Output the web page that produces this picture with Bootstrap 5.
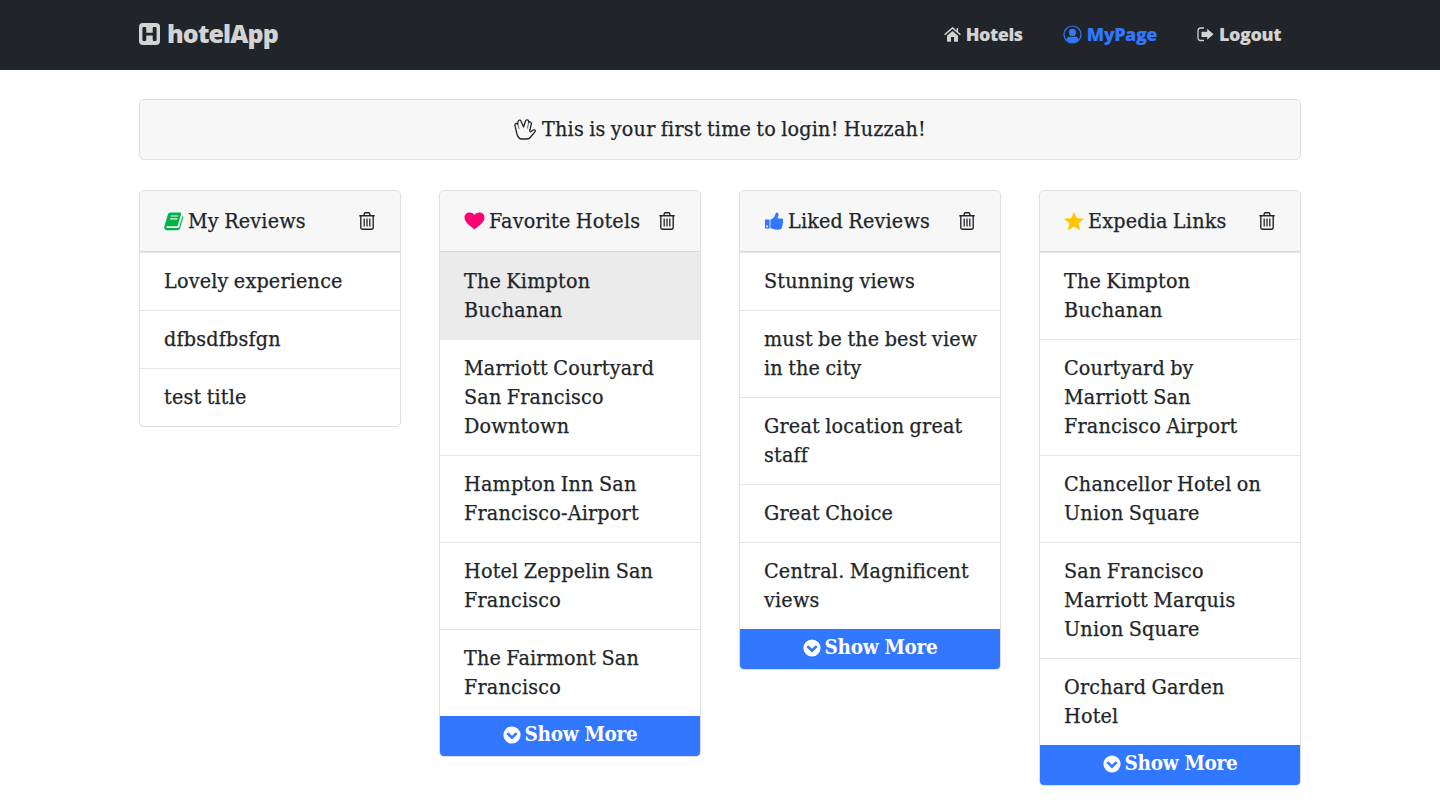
<!DOCTYPE html>
<html lang="en">
<head>
<meta charset="utf-8">
<meta name="viewport" content="width=device-width, initial-scale=1">
<title>hotelApp</title>
<link href="https://cdn.jsdelivr.net/npm/bootstrap@5.3.0/dist/css/bootstrap.min.css" rel="stylesheet">
<style>
body{font-family:"DejaVu Serif Condensed","DejaVu Serif",serif;font-stretch:condensed;font-size:21.3px;line-height:29px;letter-spacing:.2px;word-spacing:-1px;color:#212529;background:#fff;overflow:hidden;-webkit-text-stroke:.25px currentColor}
.page{width:1162px;margin:0 auto}
.topbar{height:70px;background:#212529;font-family:"Open Sans",sans-serif;font-stretch:normal;font-weight:700;-webkit-text-stroke:0}
.topbar .page{padding-bottom:2px}
.topbar a{color:#d3d3d3;text-decoration:none;white-space:nowrap}
.topbar .navbar-brand{font-size:25px;line-height:36px;font-weight:800;letter-spacing:-.9px;gap:7px}
.menu{gap:40px;padding-right:20px}
.menu a{font-size:18px;line-height:27px;font-weight:800;letter-spacing:-.45px;gap:5px}
.menu a.current{color:#3277ff}
svg{display:block;flex:none;fill:currentColor}
.card{border-color:#dfdfdf;border-radius:5px;overflow:hidden}
.notice{height:61px;margin-top:29px;background:#f7f7f7;gap:6px}
.caption-text{margin-top:-2px}
.boards{gap:38px;margin-top:30px}
.board{width:262px}
.board .card-header{height:61px;padding:0 25px 0 24px;background:#f7f7f7;border-color:#d8d8d8;white-space:nowrap}
.board .card-header+.list-group{border-top:1px solid #e6e6e6;border-bottom:0}
.board .list-group-item{padding:13px 0 15px 24px;border-color:#e6e6e6;color:#212529;white-space:nowrap}
.board .list-group-item.picked{background:#ebebeb;border-color:#ebebeb;margin-top:-1px;padding-top:14px}
.more{height:40px;padding:0 0 3px;gap:4px;border:0;border-radius:0;background:#3277ff;color:#fff;font:inherit;font-weight:700;font-size:20.5px;letter-spacing:-.3px;-webkit-text-stroke:0}
</style>
</head>
<body>
<svg width="0" height="0" class="d-none">
<symbol id="trash" viewBox="0 0 16 18"><path d="M.3 3.7h15.4M4.8 3.4l.7-2.1c.1-.4.4-.6.8-.6h3.4c.4 0 .7.2.8.6l.7 2.1M1.8 3.8v12c0 .9.6 1.4 1.4 1.4h9.6c.8 0 1.4-.5 1.4-1.4v-12" fill="none" stroke="currentColor" stroke-width="1.4"/><path d="M5.2 6.500v8M8 6.500v8M10.800 6.500v8" stroke="currentColor" stroke-width="1.3"/></symbol>
<symbol id="down" viewBox="0 0 18 18"><path fill-rule="evenodd" d="M9 .4a8.600 8.600 0 1 0 0 17.200A8.600 8.600 0 0 0 9 .4zM5.200 6.200 9 9.800l3.800-3.600 1.800 1.900L9 13.600 3.400 8.100z"/></symbol>
</svg>
<nav class="topbar">
<div class="page h-100 d-flex align-items-center justify-content-between">
<a class="navbar-brand d-flex align-items-center m-0 p-0" href="#"><svg width="21" height="22" viewBox="0 0 21 22"><path fill-rule="evenodd" d="M4 0h13a4 4 0 0 1 4 4v14a4 4 0 0 1-4 4H4a4 4 0 0 1-4-4V4a4 4 0 0 1 4-4zM4.600 4Q3.400 4 3.400 5.200V16.800Q3.400 18 4.600 18H6.200Q7.300 18 7.300 16.800V12.600H13.700V16.800Q13.700 18 14.800 18H16.400Q17.600 18 17.600 16.800V5.200Q17.600 4 16.400 4H14.800Q13.700 4 13.700 5.200V9.800H7.300V5.200Q7.300 4 6.200 4z"/></svg><span class="caption-text">hotelApp</span></a>
<div class="menu d-flex">
<a class="d-flex align-items-center" href="#"><svg width="17" height="15" viewBox="0 0 17 15"><path d="M8.500 3.900 14 8.700V14a.7.700 0 0 1-.7.700H10V10H7v4.700H3.700A.7.700 0 0 1 3 14V8.700z"/><path d="m.6 7.800 7.900-6.900 7.900 6.900M13.400 1v3.500" fill="none" stroke="currentColor" stroke-width="1.500"/></svg>Hotels</a>
<a class="current d-flex align-items-center" href="#"><svg width="19" height="19" viewBox="0 0 19 19"><circle cx="9.500" cy="9.500" r="8.500" fill="none" stroke="currentColor" stroke-width="1.200"/><circle cx="9.500" cy="7.400" r="3.600"/><path d="M3.200 14.200c1-2.100 2.700-2.700 4.100-2.700 1.500.7 2.900.7 4.400 0 1.400 0 3.100.6 4.100 2.700a7.800 7.800 0 0 1-12.600 0z"/></svg>MyPage</a>
<a class="d-flex align-items-center" href="#"><svg width="17" height="15" viewBox="0 0 17 15"><path d="M7 1H3.400A2.400 2.400 0 0 0 1 3.400v7.700a2.400 2.400 0 0 0 2.400 2.400H7" fill="none" stroke="currentColor" stroke-width="1.300"/><path d="M10.200 1.700 16.500 7.200l-6.300 5.500V9.900H4.500V4.700h5.700z"/></svg>Logout</a>
</div>
</div>
</nav>
<main class="page">
<div class="card notice flex-row align-items-center justify-content-center"><svg width="22" height="21" viewBox="0 0 22 21" stroke="currentColor" stroke-width="1.300" stroke-linejoin="round" stroke-linecap="round" style="fill:none"><path d="M2.800 14.500 1 6.600C.5 4.600 2.700 3.900 3.700 5.200 3.500 1.100 6.100-.1 7.100 2.400L9.600 8l1.800-5.700c.8-2.500 3.600-1.500 3.300.8 1.500-.8 3 .3 2.600 1.900l-1.600 6.700c.1 1.300 1 1.400 1.800.6 1.300-1.500 3.800-1.900 3.800-.4 0 1.100-2.500 3.400-4 5.200-1.200 1.900-2.500 2.900-4.600 2.900H7.600c-2.900 0-4-2.100-4.800-5.500z"/><path d="M3.700 5.200 5 9.500M14.700 3.100l-1.200 6" stroke-width=".7"/></svg><span class="caption-text">This is your first time to login! Huzzah!</span></div>
<div class="boards d-flex align-items-start">
<section class="card board">
<div class="card-header d-flex align-items-center justify-content-between"><span class="d-flex align-items-center gap-1"><svg width="20" height="19" viewBox="0 0 20 19" style="fill:#00b248"><path fill-rule="evenodd" d="M6.500.5h9.300c1 0 1.500.7 1.200 1.700l-3.100 10.700c-.3.900-.8 1.300-1.700 1.300H3.500c-1.500 0-1.600 1.800 0 1.800h10.100c.9 0 1.400-.4 1.700-1.300L18.500 4c.8.300.9.900.7 1.700l-3.100 10.500c-.4 1.300-1.300 2-2.600 2H3.100c-2.200 0-3.400-1.700-2.700-3.900L3.900 2.600C4.300 1.200 5.100.5 6.500.5zM7 3.400l-.3 1.100h7.400l.3-1.100zm-.8 2.900-.3 1.100h7.400l.3-1.100z"/></svg><span class="caption-text">My Reviews</span></span><svg width="16" height="18"><use href="#trash"/></svg></div>
<div class="list-group list-group-flush"><div class="list-group-item">Lovely experience</div><div class="list-group-item">dfbsdfbsfgn</div><div class="list-group-item">test title</div></div>
</section>
<section class="card board">
<div class="card-header d-flex align-items-center justify-content-between"><span class="d-flex align-items-center gap-1"><svg width="21" height="18" viewBox="0 0 21 18" style="fill:#ff0073"><path d="M10.500 17.500C7 14.500.5 10.800.5 5.500.5.300 7.200-1.200 10.500 2.900 13.800-1.200 20.500.3 20.500 5.500c0 5.300-6.500 9-10 12z"/></svg><span class="caption-text">Favorite Hotels</span></span><svg width="16" height="18"><use href="#trash"/></svg></div>
<div class="list-group list-group-flush"><div class="list-group-item picked">The Kimpton<br>Buchanan</div><div class="list-group-item">Marriott Courtyard<br>San Francisco<br>Downtown</div><div class="list-group-item">Hampton Inn San<br>Francisco-Airport</div><div class="list-group-item">Hotel Zeppelin San<br>Francisco</div><div class="list-group-item">The Fairmont San<br>Francisco</div></div>
<button class="more d-flex align-items-center justify-content-center"><svg width="18" height="18"><use href="#down"/></svg>Show More</button>
</section>
<section class="card board">
<div class="card-header d-flex align-items-center justify-content-between"><span class="d-flex align-items-center gap-1"><svg width="20" height="18" viewBox="-1 0 20 18" style="fill:#3277ff"><path d="M6 7.500c2.600-1 3.700-3.200 4.700-6.300.4-1.200 2.900-.9 2.800 1.500 0 1.200-.7 2.500-.8 3.800h3.700c2 0 2.200 1.800 1.300 2.700 1 .9.800 2-.2 2.600.6.9.2 1.900-.6 2.300.5 1.700-.4 3-2.300 3.400-3.500.5-6-.1-8.600-1.200z"/><path fill-rule="evenodd" d="M0 7.500h4v9H0zM1.200 13.500v1.700h1.700v-1.700z"/><path opacity=".6" d="M4 7.500h2v9H4z"/></svg><span class="caption-text">Liked Reviews</span></span><svg width="16" height="18"><use href="#trash"/></svg></div>
<div class="list-group list-group-flush"><div class="list-group-item">Stunning views</div><div class="list-group-item">must be the best view<br>in the city</div><div class="list-group-item">Great location great<br>staff</div><div class="list-group-item">Great Choice</div><div class="list-group-item">Central. Magnificent<br>views</div></div>
<button class="more d-flex align-items-center justify-content-center"><svg width="18" height="18"><use href="#down"/></svg>Show More</button>
</section>
<section class="card board">
<div class="card-header d-flex align-items-center justify-content-between"><span class="d-flex align-items-center gap-1"><svg width="20" height="19" viewBox="0 0 20 19" style="fill:#ffc400"><path d="m10 .500 2.500 6.100 6.800.400-5.200 4.200 1.700 6.500-5.800-3.500-5.800 3.500 1.700-6.500L.7 7l6.800-.4z" stroke="#ffc400" stroke-width=".7" stroke-linejoin="round"/></svg><span class="caption-text">Expedia Links</span></span><svg width="16" height="18"><use href="#trash"/></svg></div>
<div class="list-group list-group-flush"><div class="list-group-item">The Kimpton<br>Buchanan</div><div class="list-group-item">Courtyard by<br>Marriott San<br>Francisco Airport</div><div class="list-group-item">Chancellor Hotel on<br>Union Square</div><div class="list-group-item">San Francisco<br>Marriott Marquis<br>Union Square</div><div class="list-group-item">Orchard Garden<br>Hotel</div></div>
<button class="more d-flex align-items-center justify-content-center"><svg width="18" height="18"><use href="#down"/></svg>Show More</button>
</section>
</div>
</main>
<script src="https://cdn.jsdelivr.net/npm/bootstrap@5.3.0/dist/js/bootstrap.bundle.min.js"></script>
</body>
</html>
